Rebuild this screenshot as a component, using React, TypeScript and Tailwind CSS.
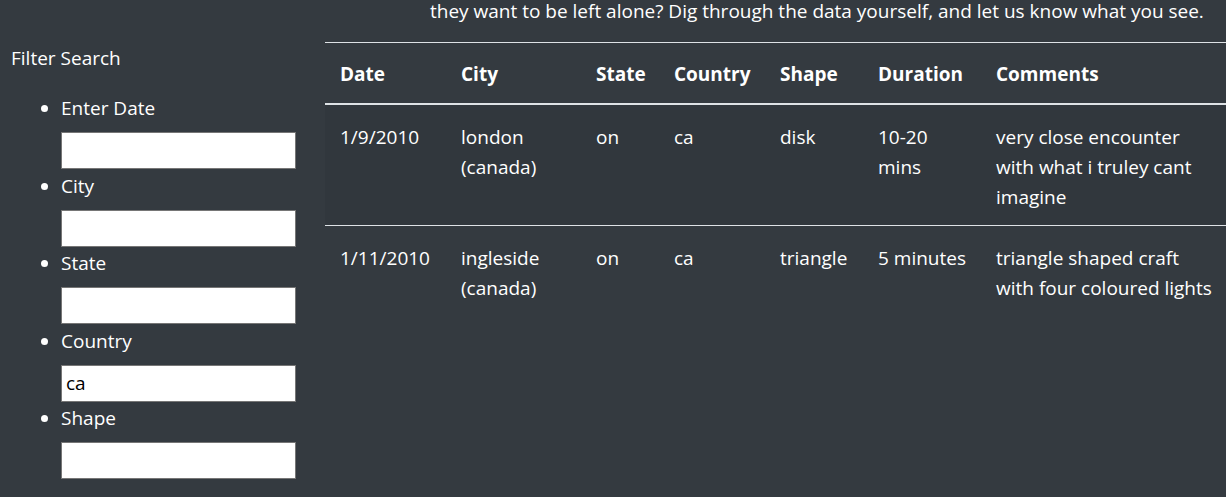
const filters = [
  { label: 'Enter Date', value: '' },
  { label: 'City', value: '' },
  { label: 'State', value: '' },
  { label: 'Country', value: 'ca' },
  { label: 'Shape', value: '' },
]

const columns = [
  { name: 'Date', width: 'w-[121px]' },
  { name: 'City', width: 'w-[135px]' },
  { name: 'State', width: 'w-[78px]' },
  { name: 'Country', width: 'w-[106px]' },
  { name: 'Shape', width: 'w-[98px]' },
  { name: 'Duration', width: 'w-[118px]' },
  { name: 'Comments', width: 'w-[247px]' },
]

const sightings = [
  ['1/9/2010', 'london (canada)', 'on', 'ca', 'disk', '10-20 mins', 'very close encounter with what i truley cant imagine'],
  ['1/11/2010', 'ingleside (canada)', 'on', 'ca', 'triangle', '5 minutes', 'triangle shaped craft with four coloured lights'],
]

export default function App() {
  return (
    <div
      className="h-[497px] w-full overflow-hidden bg-[#343a40] text-[19px] leading-[30px] text-white"
      style={{ fontFamily: '"Open Sans", sans-serif' }}
    >
      {/* tail of the intro paragraph, page is scrolled */}
      <div className="h-[42px]">
        <p className="whitespace-nowrap pl-[430px] leading-[22px]">
          they want to be left alone? Dig through the data yourself, and let us know what you see.
        </p>
      </div>

      <div className="flex items-start">
        <aside className="w-[325px] shrink-0 pl-[11px] pt-[1px]">
          <div>Filter Search</div>
          <ul className="mt-[20px] list-disc pl-[50px]">
            {filters.map((f) => (
              <li key={f.label} className="pb-[1.6px]">
                <label className="block">{f.label}</label>
                <input
                  type="text"
                  defaultValue={f.value}
                  className="mt-[9px] block h-[37px] w-[235px] border border-[#767676] bg-white px-[4px] text-[19px] text-black outline-none"
                />
              </li>
            ))}
          </ul>
        </aside>

        <table className="w-[903px] shrink-0 table-fixed border-collapse text-left">
          <thead>
            <tr>
              {columns.map((c) => (
                <th
                  key={c.name}
                  className={`${c.width} border-t border-b-2 border-[#dee2e6] px-[15px] pt-[16px] pb-[14px] align-bottom font-bold`}
                >
                  {c.name}
                </th>
              ))}
            </tr>
          </thead>
          <tbody>
            {sightings.map((row, i) => (
              <tr key={row[0]} className={i % 2 === 0 ? 'bg-[#31373d]' : ''}>
                {row.map((cell, j) => (
                  <td key={j} className="border-t border-[#dee2e6] px-[15px] pt-[17px] pb-[13px] align-top">
                    {cell}
                  </td>
                ))}
              </tr>
            ))}
          </tbody>
        </table>
      </div>
    </div>
  )
}
